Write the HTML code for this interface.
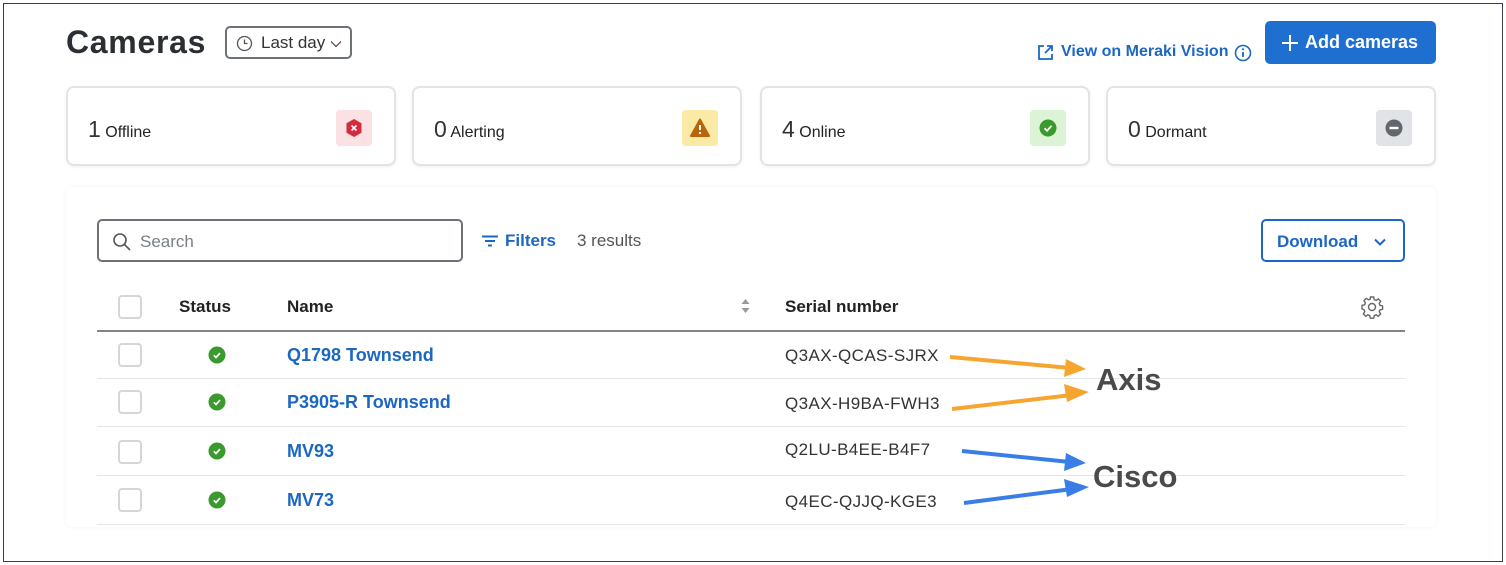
<!DOCTYPE html>
<html><head><meta charset="utf-8"><style>
*{box-sizing:border-box;margin:0;padding:0}
body{width:1506px;height:565px;background:#fff;font-family:"Liberation Sans",sans-serif;position:relative;overflow:hidden;color:#222}
.a{position:absolute}
.frame{left:3px;top:3px;width:1500px;height:559px;border:1.5px solid #3a3f45}
.card{top:86px;height:80px;width:330px;border:2px solid #e3e4e7;border-radius:8px;background:#fff;box-shadow:0 1px 3px rgba(0,0,0,.06)}
.card .t{position:absolute;left:20px;top:28px;font-size:16px;color:#222}
.card .t b{font-size:23px;font-weight:normal;color:#333}
.card .ic{position:absolute;right:22px;top:22px;width:36px;height:36px;border-radius:4px}
.cb{position:absolute;left:118px;width:24px;height:24px;border:2px solid #d4d6da;border-radius:4px}
.ok{position:absolute;left:208px;width:18px;height:18px}
.nm{position:absolute;left:287px;font-size:18px;font-weight:bold;color:#1d67c4}
.sn{position:absolute;left:785px;font-size:17px;color:#333;letter-spacing:.4px}
.ln{position:absolute;left:97px;width:1308px;height:1px;background:#e3e5e8}
</style></head><body>
<div class="a frame"></div>
<div class="a" style="left:66px;top:24px;font-size:32px;font-weight:bold;color:#2b2f33;letter-spacing:.7px">Cameras</div>
<div class="a" style="left:225px;top:26px;width:127px;height:33px;border:2px solid #6d7278;border-radius:5px;font-size:17px;color:#333;padding:5px 0 0 34px">Last day
<svg class="a" style="left:9px;top:7px" width="17" height="17" viewBox="0 0 17 17"><circle cx="8.5" cy="8.5" r="7" fill="none" stroke="#555" stroke-width="1.3"/><path d="M8.5 4.5v4h3" fill="none" stroke="#555" stroke-width="1.3"/></svg>
<svg class="a" style="left:103px;top:12px" width="12" height="8" viewBox="0 0 12 8"><path d="M1 1.5l5 5 5-5" fill="none" stroke="#555" stroke-width="1.3"/></svg></div>
<svg class="a" style="left:1037px;top:44px" width="17" height="17" viewBox="0 0 17 17"><path d="M7 2H2v13h13v-5M10 2h5v5M15 2L8 9" fill="none" stroke="#1d67c4" stroke-width="1.8"/></svg>
<div class="a" style="left:1061px;top:43px;font-size:16px;font-weight:bold;color:#1d67c4">View on Meraki Vision</div>
<svg class="a" style="left:1234px;top:44px" width="18" height="18" viewBox="0 0 18 18"><circle cx="9" cy="9" r="7.5" fill="none" stroke="#1d67c4" stroke-width="1.6"/><path d="M9 8v5" stroke="#1d67c4" stroke-width="1.8"/><circle cx="9" cy="5.3" r="1.1" fill="#1d67c4"/></svg>
<div class="a" style="left:1265px;top:21px;width:171px;height:43px;background:#1f6fd1;border-radius:5px;color:#fff;font-size:18px;font-weight:bold;padding:11px 0 0 40px">Add cameras
<svg class="a" style="left:16px;top:13px" width="18" height="18" viewBox="0 0 18 18"><path d="M9 1v16M1 9h16" stroke="#fff" stroke-width="2"/></svg></div>

<div class="a card" style="left:66px"><div class="t"><b>1</b> Offline</div><div class="ic" style="background:#fbe1e3"><svg width="36" height="36" viewBox="0 0 36 36"><path d="M18 9l7.5 4.3v9.4L18 27l-7.5-4.3v-9.4z" fill="#d22d3d"/><path d="M15.5 15.5l5 5M20.5 15.5l-5 5" stroke="#fff" stroke-width="1.6"/></svg></div></div>
<div class="a card" style="left:412px"><div class="t"><b>0</b> Alerting</div><div class="ic" style="background:#fbeaa6"><svg width="36" height="36" viewBox="0 0 36 36"><path d="M18 9.5L27 26H9z" fill="#b8650a" stroke="#b8650a" stroke-width="2" stroke-linejoin="round"/><path d="M18 15v5" stroke="#fff" stroke-width="2"/><circle cx="18" cy="23" r="1.2" fill="#fff"/></svg></div></div>
<div class="a card" style="left:760px"><div class="t"><b>4</b> Online</div><div class="ic" style="background:#dcf3d6"><svg width="36" height="36" viewBox="0 0 36 36"><circle cx="18" cy="18" r="8.5" fill="#3a9a2e"/><path d="M14.5 18.3l2.5 2.5 4.5-5" fill="none" stroke="#fff" stroke-width="1.8"/></svg></div></div>
<div class="a card" style="left:1106px"><div class="t"><b>0</b> Dormant</div><div class="ic" style="background:#e1e3e7"><svg width="36" height="36" viewBox="0 0 36 36"><circle cx="18" cy="18" r="8.5" fill="#62676e"/><path d="M13.5 18h9" stroke="#fff" stroke-width="2.4"/></svg></div></div>

<div class="a" style="left:66px;top:187px;width:1370px;height:340px;background:#fff;box-shadow:0 0 6px rgba(0,0,0,.05);border-radius:6px"></div>
<div class="a" style="left:97px;top:219px;width:366px;height:43px;border:2px solid #6d7278;border-radius:5px;font-size:17px;color:#7a7f85;padding:11px 0 0 41px">Search
<svg class="a" style="left:13px;top:11px" width="20" height="20" viewBox="0 0 20 20"><circle cx="8" cy="8" r="6" fill="none" stroke="#555" stroke-width="1.6"/><path d="M12.5 12.5L18 18" stroke="#555" stroke-width="1.6"/></svg></div>
<svg class="a" style="left:481px;top:235px" width="18" height="12" viewBox="0 0 18 12"><path d="M1 1.5h16M4 6h10M7 10.5h4" stroke="#1d67c4" stroke-width="2"/></svg>
<div class="a" style="left:505px;top:231px;font-size:17px;font-weight:bold;color:#1d67c4">Filters</div>
<div class="a" style="left:577px;top:231px;font-size:17px;color:#555">3 results</div>
<div class="a" style="left:1261px;top:219px;width:144px;height:43px;border:2px solid #1d67c4;border-radius:5px;font-size:17px;font-weight:bold;color:#1d67c4;padding:11px 0 0 14px">Download
<svg class="a" style="left:111px;top:17px" width="12" height="8" viewBox="0 0 12 8"><path d="M1 1.5l5 5 5-5" fill="none" stroke="#1d67c4" stroke-width="2"/></svg></div>

<div class="cb" style="top:295px"></div>
<div class="a" style="left:179px;top:297px;font-size:17px;font-weight:bold;color:#222">Status</div>
<div class="a" style="left:287px;top:297px;font-size:17px;font-weight:bold;color:#222">Name</div>
<svg class="a" style="left:740px;top:297px" width="11" height="18" viewBox="0 0 11 18"><path d="M5.5 2l4 5h-8zM5.5 16l4-5h-8z" fill="#999"/></svg>
<div class="a" style="left:785px;top:297px;font-size:17px;font-weight:bold;color:#222">Serial number</div>
<svg class="a" style="left:1360px;top:295px" width="24" height="24" viewBox="0 0 24 24"><path d="M10.3 2h3.4l.5 2.6 1.9.8 2.2-1.5 2.4 2.4-1.5 2.2.8 1.9 2.6.5v3.4l-2.6.5-.8 1.9 1.5 2.2-2.4 2.4-2.2-1.5-1.9.8-.5 2.6h-3.4l-.5-2.6-1.9-.8-2.2 1.5-2.4-2.4 1.5-2.2-.8-1.9L2 13.7v-3.4l2.6-.5.8-1.9-1.5-2.2 2.4-2.4 2.2 1.5 1.9-.8z" fill="none" stroke="#666" stroke-width="1.4" stroke-linejoin="round"/><circle cx="12" cy="12" r="3.5" fill="none" stroke="#666" stroke-width="1.4"/></svg>
<div class="a" style="left:97px;top:330px;width:1308px;height:2px;background:#80858b"></div>

<svg width="0" height="0" style="position:absolute"><defs><g id="ck"><circle cx="9" cy="9" r="8.5" fill="#3a9a2e"/><path d="M5.8 9.3l2.2 2.2 4-4.4" fill="none" stroke="#fff" stroke-width="1.7"/></g></defs></svg>
<div class="cb" style="top:343px"></div><svg class="ok" style="top:346px" viewBox="0 0 18 18"><use href="#ck"/></svg><div class="nm" style="top:345px">Q1798 Townsend</div><div class="sn" style="top:346px">Q3AX-QCAS-SJRX</div><div class="ln" style="top:378px"></div>
<div class="cb" style="top:390px"></div><svg class="ok" style="top:393px" viewBox="0 0 18 18"><use href="#ck"/></svg><div class="nm" style="top:392px">P3905-R Townsend</div><div class="sn" style="top:394px">Q3AX-H9BA-FWH3</div><div class="ln" style="top:426px"></div>
<div class="cb" style="top:440px"></div><svg class="ok" style="top:442px" viewBox="0 0 18 18"><use href="#ck"/></svg><div class="nm" style="top:441px">MV93</div><div class="sn" style="top:440px">Q2LU-B4EE-B4F7</div><div class="ln" style="top:475px"></div>
<div class="cb" style="top:488px"></div><svg class="ok" style="top:491px" viewBox="0 0 18 18"><use href="#ck"/></svg><div class="nm" style="top:490px">MV73</div><div class="sn" style="top:492px">Q4EC-QJJQ-KGE3</div><div class="ln" style="top:524px"></div>
<svg class="a" style="left:0;top:0" width="1506" height="565">
<g fill="none" stroke-width="4"><path d="M950 357L1070 368" stroke="#f6a531"/><path d="M952 409L1072 395" stroke="#f6a531"/><path d="M962 451L1070 462" stroke="#3b7de6"/><path d="M964 503L1072 489" stroke="#3b7de6"/></g>
<path d="M1086 369L1064 377L1066 359z" fill="#f6a531"/><path d="M1089 392L1067 402L1064 384z" fill="#f6a531"/>
<path d="M1086 463L1064 471L1066 453z" fill="#3b7de6"/><path d="M1089 487L1067 497L1064 479z" fill="#3b7de6"/>
</svg>
<div class="a" style="left:1096px;top:362px;font-size:31px;font-weight:bold;color:#4a4a4a">Axis</div>
<div class="a" style="left:1093px;top:459px;font-size:31px;font-weight:bold;color:#4a4a4a">Cisco</div>
</body></html>
